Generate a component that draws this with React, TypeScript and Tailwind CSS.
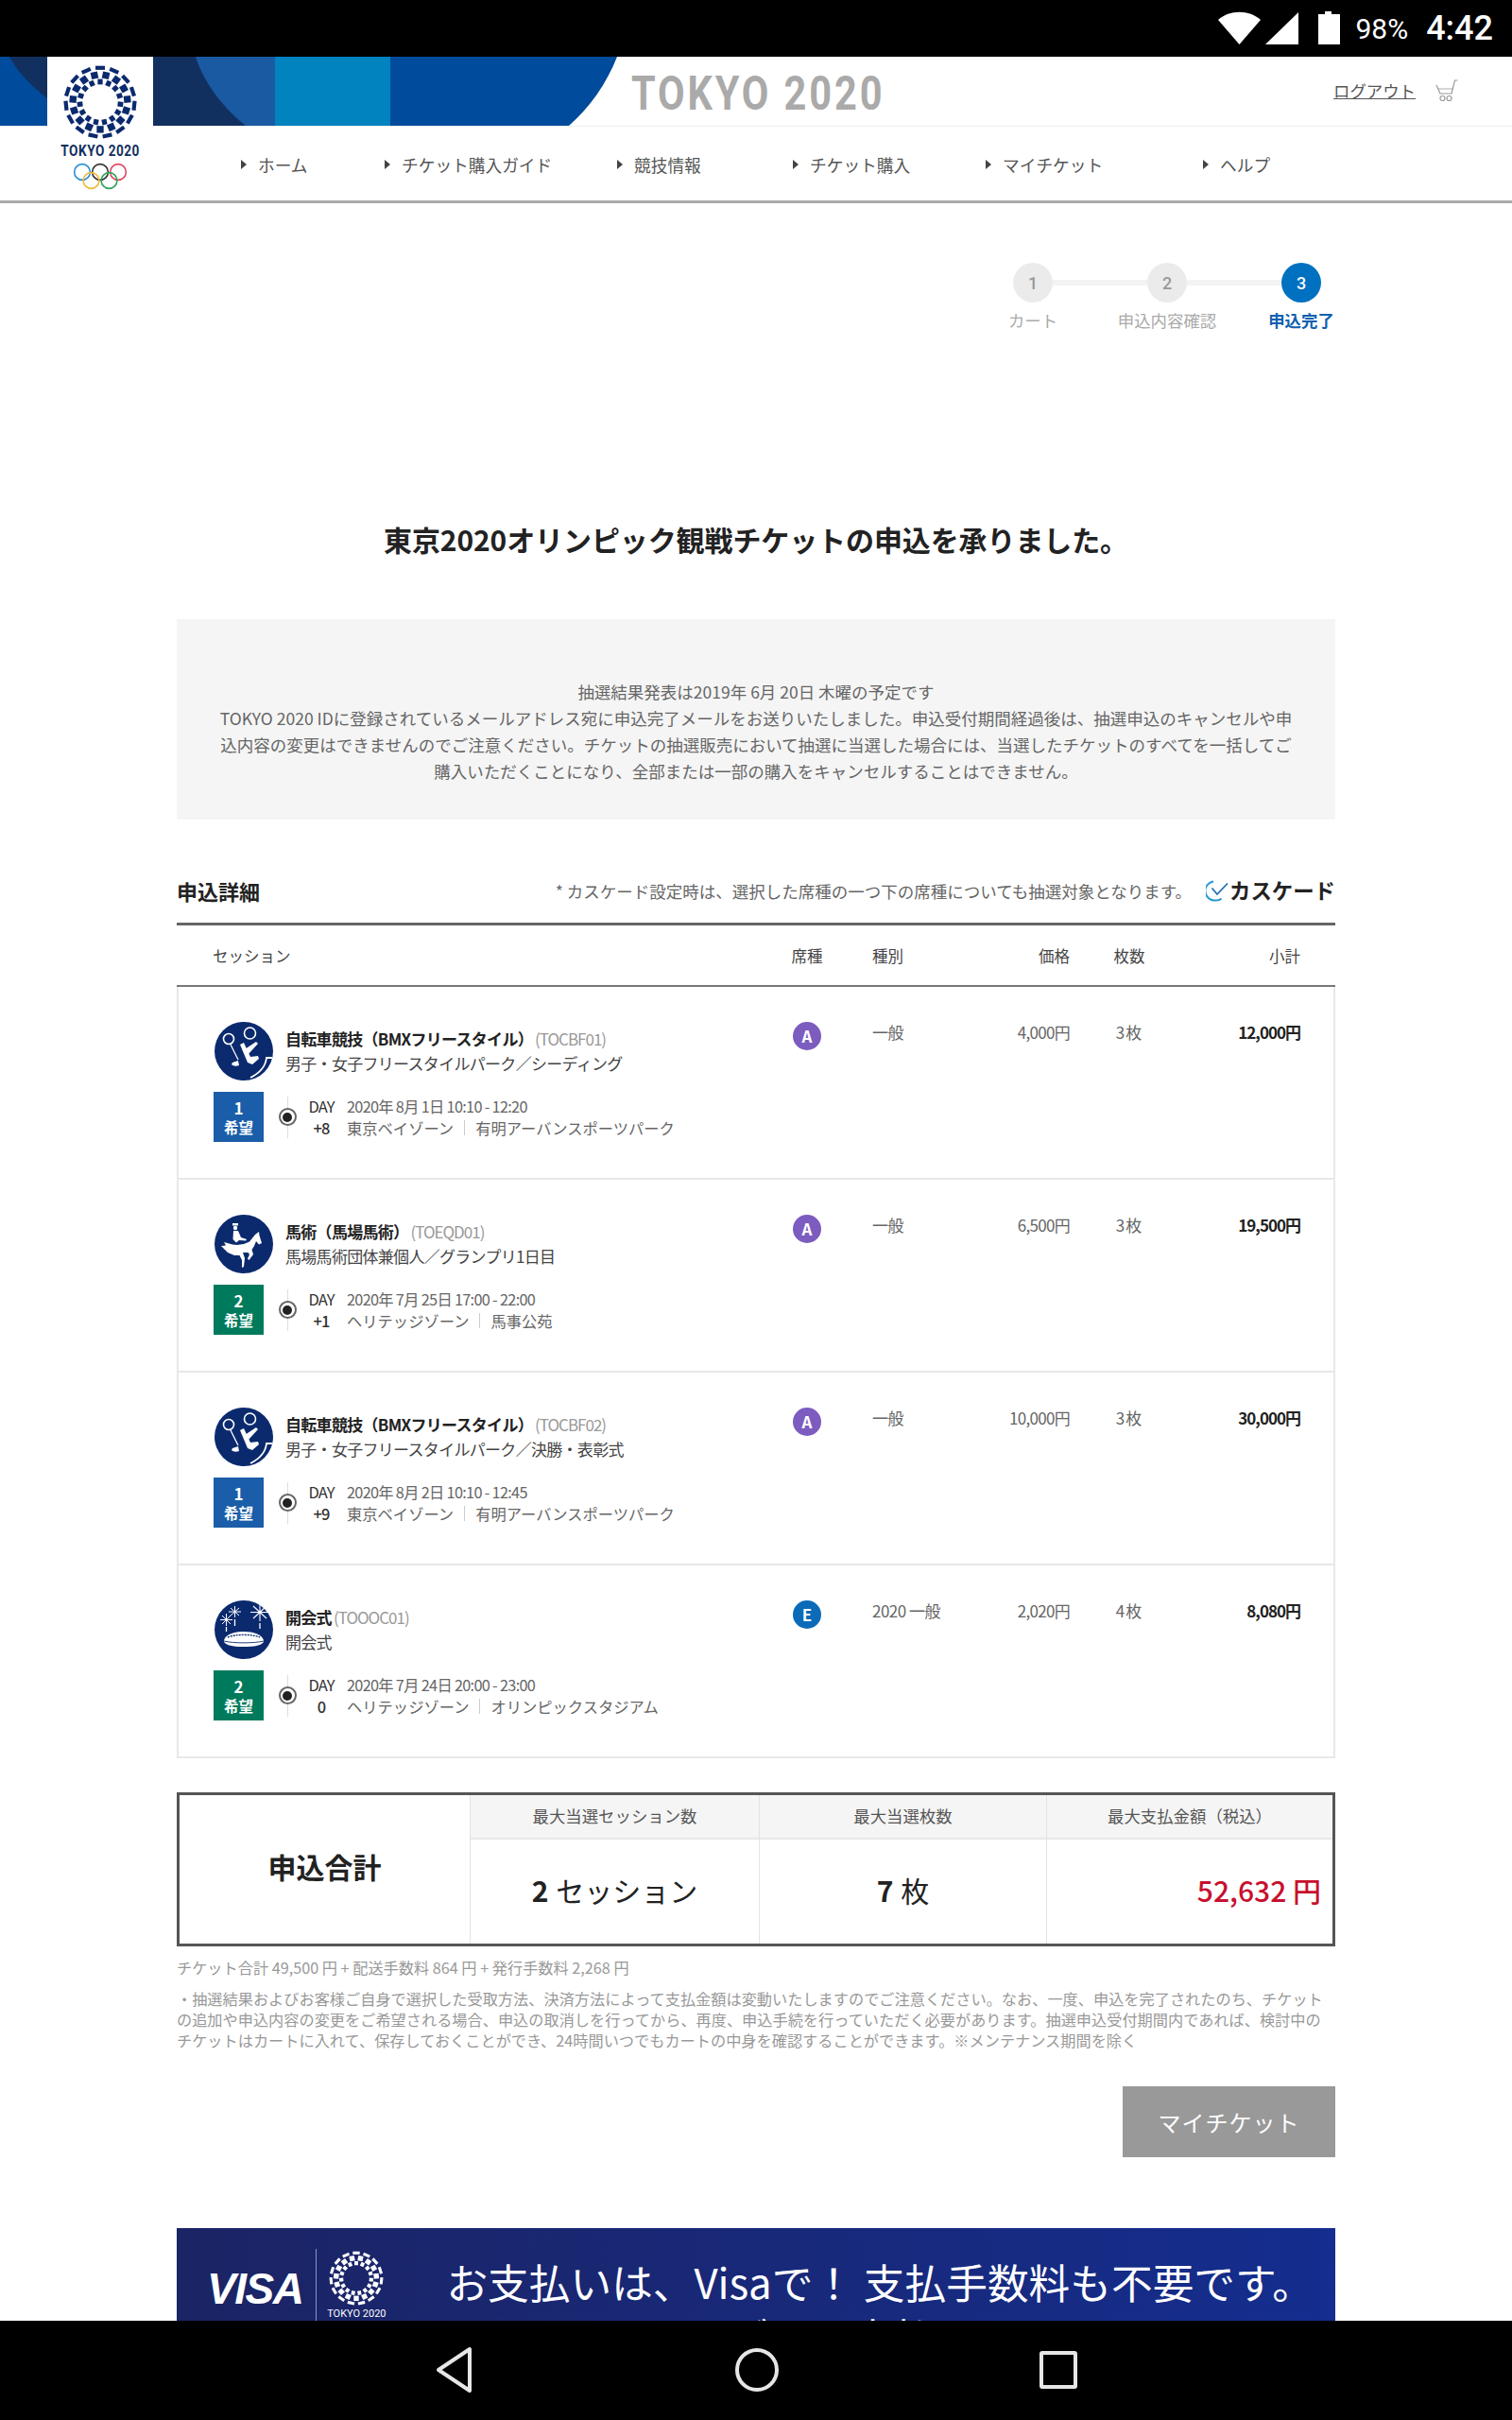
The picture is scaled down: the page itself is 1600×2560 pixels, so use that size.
const navItems = [
  { label: "ホーム", w: "w-[152px]" },
  { label: "チケット購入ガイド", w: "w-[246px]" },
  { label: "競技情報", w: "w-[186px]" },
  { label: "チケット購入", w: "w-[204px]" },
  { label: "マイチケット", w: "w-[230px]" },
  { label: "ヘルプ", w: "w-[100px]" },
]

const sessions = [
  {
    icon: "bmx",
    title: "自転車競技（BMXフリースタイル）",
    code: "(TOCBF01)",
    sub: "男子・女子フリースタイルパーク／シーディング",
    rank: 1,
    day: "+8",
    date: "2020年 8月 1日 10:10 - 12:20",
    zone: "東京ベイゾーン",
    venue: "有明アーバンスポーツパーク",
    seat: "A",
    kind: "一般",
    price: "4,000円",
    count: "3枚",
    total: "12,000円",
  },
  {
    icon: "horse",
    title: "馬術（馬場馬術）",
    code: "(TOEQD01)",
    sub: "馬場馬術団体兼個人／グランプリ1日目",
    rank: 2,
    day: "+1",
    date: "2020年 7月 25日 17:00 - 22:00",
    zone: "ヘリテッジゾーン",
    venue: "馬事公苑",
    seat: "A",
    kind: "一般",
    price: "6,500円",
    count: "3枚",
    total: "19,500円",
  },
  {
    icon: "bmx",
    title: "自転車競技（BMXフリースタイル）",
    code: "(TOCBF02)",
    sub: "男子・女子フリースタイルパーク／決勝・表彰式",
    rank: 1,
    day: "+9",
    date: "2020年 8月 2日 10:10 - 12:45",
    zone: "東京ベイゾーン",
    venue: "有明アーバンスポーツパーク",
    seat: "A",
    kind: "一般",
    price: "10,000円",
    count: "3枚",
    total: "30,000円",
  },
  {
    icon: "ceremony",
    title: "開会式",
    code: "(TOOOC01)",
    sub: "開会式",
    rank: 2,
    day: "0",
    date: "2020年 7月 24日 20:00 - 23:00",
    zone: "ヘリテッジゾーン",
    venue: "オリンピックスタジアム",
    seat: "E",
    kind: "2020 一般",
    price: "2,020円",
    count: "4枚",
    total: "8,080円",
  },
]

function Emblem({ fill, size }: { fill: string; size: number }) {
  const rings = [
    { r: 34.5, w: 9.5, h: 4, offset: 0 },
    { r: 27.5, w: 7, h: 7, offset: 12 },
    { r: 20.5, w: 5, h: 5.5, offset: 0 },
  ]
  return (
    <svg width={size} height={size} viewBox="-40 -40 80 80">
      {rings.map((ring) =>
        Array.from({ length: 15 }).map((_, i) => {
          const a = i * 24 + ring.offset
          return (
            <rect
              key={ring.r + "-" + i}
              x={-ring.w / 2}
              y={-ring.r - ring.h / 2}
              width={ring.w}
              height={ring.h}
              fill={fill}
              transform={`rotate(${a})`}
            />
          )
        }),
      )}
    </svg>
  )
}

function OlympicRings() {
  return (
    <svg width="58" height="30" viewBox="0 0 58 30" fill="none" strokeWidth="1.6">
      <circle cx="10" cy="10" r="8.4" stroke="#2b8fd6" />
      <circle cx="29" cy="10" r="8.4" stroke="#333333" />
      <circle cx="48" cy="10" r="8.4" stroke="#e0455f" />
      <circle cx="19.5" cy="19" r="8.4" stroke="#f3b93a" />
      <circle cx="38.5" cy="19" r="8.4" stroke="#2fa35a" />
    </svg>
  )
}

function HeaderBand() {
  return (
    <svg width="660" height="73" viewBox="0 0 660 73" className="block">
      <rect width="660" height="73" fill="#004b9b" />
      <path d="M10 0 C20 18 34 32 50 44 L50 0 Z" fill="#12305f" />
      <rect x="162" width="129" height="73" fill="#12305f" />
      <path d="M207 0 C216 28 236 54 260 73 L291 73 L291 0 Z" fill="#1a5aa3" />
      <rect x="291" width="122" height="73" fill="#0083bf" />
      <path d="M653 0 C642 28 624 54 602 73 L660 73 L660 0 Z" fill="#ffffff" />
    </svg>
  )
}

function SessionIcon({ type }: { type: string }) {
  if (type === "bmx") {
    return (
      <svg width="62" height="62" viewBox="0 0 62 62" className="shrink-0">
        <circle cx="31" cy="31" r="31" fill="#0b2a6e" />
        <g fill="none" stroke="#ffffff">
          <circle cx="15" cy="18" r="5.5" strokeWidth="1.6" />
          <circle cx="37.5" cy="12" r="6" strokeWidth="1.6" />
          <path d="M17 24 L25 40" strokeWidth="1.3" />
          <path d="M61 38 L55 38 C54 48 46 55 38 59" strokeWidth="1.8" />
        </g>
        <path d="M27 24 L31 22 L38 37 L46 36 L47 39 L40 45 L35 43 Z" fill="#ffffff" />
        <path d="M32 29 L44 21 L46 23 L35 35 Z" fill="#ffffff" />
        <path d="M19 43 L25 41 L26 46 C23 47 20 47 18 45 Z" fill="#ffffff" />
      </svg>
    )
  }
  if (type === "horse") {
    return (
      <svg width="62" height="62" viewBox="0 0 62 62" className="shrink-0">
        <circle cx="31" cy="31" r="31" fill="#0b2a6e" />
        <path d="M19 9 H25 V11.5 H19 Z" fill="#ffffff" />
        <circle cx="22" cy="14" r="2.2" fill="#ffffff" />
        <path d="M20 17 L25 17 L28 24 L34 26 L33 27.5 L26 27 L23 29.5 L19.5 26 Z" fill="#ffffff" />
        <path
          d="M10 29 L19 31.5 L24 32 L31 31 L37 28.5 L43 21 L47 18 L47.5 22 L50 30 L47 31.5 L44 28 L42 33 L39.5 37 L41 42 L36.5 48 L35 46.5 L37 42 L35.5 40 L30 40 L32 46 L31 55 L29 56 L29 48 L26.5 43 L21 43 L14 40 L7 33 L12 32.5 Z"
          fill="#ffffff"
        />
      </svg>
    )
  }
  return (
    <svg width="62" height="62" viewBox="0 0 62 62" className="shrink-0">
      <circle cx="31" cy="31" r="31" fill="#0b2a6e" />
      <g stroke="#ffffff" fill="none">
        <path d="M8 16 L17 25 M17 16 L8 25 M12.5 14 V27 M6 20.5 H19" strokeWidth="1" />
        <path d="M17 8 L26 16 M26 8 L17 16 M21.5 6 V18 M15 12 H28" strokeWidth="1" />
        <path d="M41 6 L55 19 M55 6 L41 19 M48 3 V22 M38 12.5 H58" strokeWidth="1.1" />
        <path d="M12.5 28 V33 M21.5 20 V27 M48 24 V30" strokeWidth="1.3" />
      </g>
      <path d="M10 42 C12 36 21 33 31 33 C41 33 50 36 52 42 L52 44 C49 48 42 49 31 49 C20 49 13 48 10 44 Z" fill="#ffffff" />
      <path d="M14 39 C22 35.5 40 35.5 48 39" stroke="#0b2a6e" strokeWidth="1.4" fill="none" strokeDasharray="2 1" />
      <path d="M10 43 C20 45.5 42 45.5 52 43" stroke="#0b2a6e" strokeWidth="0.9" fill="none" />
    </svg>
  )
}

function SessionRow({ s }: { s: (typeof sessions)[number] }) {
  return (
    <div className="grid h-[204px] grid-cols-[637px_56px_120px_130px_126px_118px] border-b-2 border-[#e8e8e8] pt-[37px]">
      <div className="pl-[38px]">
        <div className="flex h-[62px] gap-[13px]">
          <SessionIcon type={s.icon} />
          <div className="pt-[5px] text-[17px] leading-[26px] tracking-[-0.7px]">
            <p className="whitespace-nowrap">
              <span className="font-bold text-[#222]">{s.title}</span>
              <span className="ml-[2px] tracking-[-1px] text-[#999]">{s.code}</span>
            </p>
            <p className="whitespace-nowrap text-[#444]">{s.sub}</p>
          </div>
        </div>
        <div className="mt-[12px] -ml-px flex items-center">
          <div
            className={`flex h-[53px] w-[53px] flex-col items-center justify-center text-white ${
              s.rank === 1 ? "bg-[#1a5da8]" : "bg-[#007a5c]"
            }`}
          >
            <span className="text-[17px] font-bold leading-[22px]">{s.rank}</span>
            <span className="text-[15.5px] font-bold leading-[19px]">希望</span>
          </div>
          <div className="relative ml-[15px] flex h-[44px] w-[20px] items-center justify-center">
            <div className="absolute inset-y-0 left-[9.5px] w-px bg-[#dddddd]" />
            <div className="relative flex h-[19px] w-[19px] items-center justify-center rounded-full border-2 border-[#666] bg-white">
              <div className="h-[10px] w-[10px] rounded-full bg-[#222]" />
            </div>
          </div>
          <div className="ml-[6px] w-[40px] text-center text-[16.5px] leading-[23px] tracking-[-0.9px] text-[#333]">
            <p>DAY</p>
            <p className="font-medium">{s.day}</p>
          </div>
          <div className="ml-[7px] text-[16.3px] leading-[23px] text-[#666]">
            <p className="whitespace-nowrap tracking-[-0.7px]">{s.date}</p>
            <p className="flex items-center whitespace-nowrap">
              {s.zone}
              <span className="mx-[11px] h-[16px] w-px bg-[#cccccc]" />
              {s.venue}
            </p>
          </div>
        </div>
      </div>
      <div className="flex justify-center">
        <div
          className={`flex h-[30px] w-[30px] items-center justify-center rounded-full text-[17px] font-bold text-white ${
            s.seat === "A" ? "bg-[#7c5cbf]" : "bg-[#0b6bb8]"
          }`}
        >
          {s.seat}
        </div>
      </div>
      <div className="pl-[41px] text-[17px] leading-[22px] tracking-[-0.5px] text-[#666]">{s.kind}</div>
      <div className="text-right text-[17px] leading-[22px] tracking-[-0.7px] text-[#666]">{s.price}</div>
      <div className="text-center text-[17px] leading-[22px] tracking-[1px] text-[#666]">{s.count}</div>
      <div className="text-right text-[17px] font-bold leading-[22px] tracking-[-1px] text-[#222]">{s.total}</div>
    </div>
  )
}

function SummaryCell({ head, children }: { head: string; children: React.ReactNode }) {
  return (
    <div className="flex flex-col border-l border-[#e3e3e3] first:border-[#555]">
      <div className="flex h-[47px] items-center justify-center border-b-2 border-[#e8e8e8] bg-[#f5f5f5] text-[17.4px] text-[#555]">
        {head}
      </div>
      <div className="flex flex-1 items-center justify-center pb-[3px] text-[30px] text-[#222]">{children}</div>
    </div>
  )
}

export default function App() {
  return (
    <div className="flex h-[2560px] w-[1600px] flex-col overflow-hidden bg-white font-['Noto_Sans_CJK_JP','Noto_Sans',sans-serif]">
      {/* android status bar */}
      <div className="flex h-[60px] shrink-0 items-center justify-end bg-black pr-[20px] font-['Roboto',sans-serif] text-white">
        <svg width="130" height="36" viewBox="0 0 130 36" className="mr-[15px]" fill="#ffffff">
          <path d="M0 9 C12 -2 33 -2 45 9 L22.5 35 Z" />
          <path d="M50 35 L85 1 V35 Z" />
          <path d="M106 3 H113 V0 H120 V3 H129 V35 H106 Z" />
        </svg>
        <span className="mr-[19px] text-[30px]">98%</span>
        <span className="text-[36px] font-medium">4:42</span>
      </div>

      {/* site header */}
      <header className="relative shrink-0 border-b-[3px] border-[#aaaaaa]">
        <div className="flex h-[74px] items-start border-b border-[#eeeeee]">
          <HeaderBand />
          <span className="ml-[8px] mt-[10px] origin-left scale-x-[0.83] whitespace-nowrap font-['Roboto',sans-serif] text-[50px] font-bold leading-[58px] tracking-[3.5px] text-[#aaaaaa]">
            TOKYO 2020
          </span>
          <div className="ml-auto mt-[24px] flex items-center pr-[57px]">
            <span className="text-[17.4px] leading-[24px] text-[#555] underline">ログアウト</span>
            <svg width="24" height="24" viewBox="0 0 24 24" fill="none" stroke="#999999" strokeWidth="1.2" className="ml-[21px]">
              <path d="M23.5 1 H20.5 L17 15 H5 L1 6" />
              <path d="M3 10 H19" strokeWidth="0.8" />
              <circle cx="7.5" cy="20" r="2.5" />
              <circle cx="14.5" cy="20" r="2.5" />
            </svg>
          </div>
        </div>
        <nav className="flex h-[78px] items-center pl-[255px] pt-[2px]">
          {navItems.map((item) => (
            <div key={item.label} className={`flex items-center gap-[12px] ${item.w}`}>
              <span className="h-0 w-0 border-y-[5px] border-l-[6px] border-y-transparent border-l-[#444]" />
              <span className="whitespace-nowrap text-[17.7px] text-[#555]">{item.label}</span>
            </div>
          ))}
        </nav>
        <div className="absolute left-[50px] top-0 flex h-[150px] w-[112px] flex-col items-center bg-white pt-[6px]">
          <Emblem fill="#0b2a6e" size={84} />
          <span className="scale-x-[0.85] whitespace-nowrap font-['Roboto',sans-serif] text-[16px] font-bold leading-[20px] tracking-[0.6px] text-[#12305f]">
            TOKYO 2020
          </span>
          <div className="mt-[2px]">
            <OlympicRings />
          </div>
        </div>
      </header>

      <main className="min-h-0 flex-1 overflow-hidden">
        {/* steps */}
        <div className="pl-[1022px] pt-[63px]">
          <div className="flex items-center pl-[50px]">
            <div className="flex h-[42px] w-[42px] items-center justify-center rounded-full bg-[#ebebeb] font-['Roboto',sans-serif] text-[18px] font-medium text-[#999]">1</div>
            <div className="h-[6px] w-[100px] bg-[#f3f3f3]" />
            <div className="flex h-[42px] w-[42px] items-center justify-center rounded-full bg-[#ebebeb] font-['Roboto',sans-serif] text-[18px] font-medium text-[#999]">2</div>
            <div className="h-[6px] w-[100px] bg-[#f3f3f3]" />
            <div className="flex h-[42px] w-[42px] items-center justify-center rounded-full bg-[#0070c0] font-['Roboto',sans-serif] text-[18px] font-medium text-white">3</div>
          </div>
          <div className="mt-[7px] grid w-[426px] grid-cols-3 text-center text-[17.4px] leading-[24px] text-[#aaaaaa]">
            <span>カート</span>
            <span>申込内容確認</span>
            <span className="font-bold text-[#1060b0]">申込完了</span>
          </div>
        </div>

        <h1 className="mt-[199px] text-center text-[30px] font-bold leading-[40px] tracking-[-0.1px] text-[#222]">
          東京2020オリンピック観戦チケットの申込を承りました。
        </h1>

        <div className="mx-[187px] mt-[65px]">
          <div className="h-[212px] bg-[#f5f5f5] px-[40px] pt-[63px] text-center text-[17.5px] leading-[28px] text-[#666]">
            <p>抽選結果発表は2019年 6月 20日 木曜の予定です</p>
            <p>
              TOKYO 2020 IDに登録されているメールアドレス宛に申込完了メールをお送りいたしました。申込受付期間経過後は、抽選申込のキャンセルや申込内容の変更はできませんのでご注意ください。チケットの抽選販売において抽選に当選した場合には、当選したチケットのすべてを一括してご購入いただくことになり、全部または一部の購入をキャンセルすることはできません。
            </p>
          </div>

          <div className="mt-[55px] flex h-[40px] items-center">
            <h2 className="text-[22px] font-bold text-[#222]">申込詳細</h2>
            <p className="ml-auto pt-[2px] text-[17.5px] text-[#666]">* カスケード設定時は、選択した席種の一つ下の席種についても抽選対象となります。</p>
            <svg width="24" height="24" viewBox="0 0 24 24" fill="none" className="ml-[15px] mr-[1px]">
              <path d="M8 2.5 A10 10 0 0 0 11 22.5 C13 22.5 15 22 16.5 20.5" stroke="#2a9bd4" strokeWidth="2" />
              <path d="M6.5 9.5 L12 16 L23 4.5" stroke="#1f6fb5" strokeWidth="1.8" />
            </svg>
            <span className="text-[22.4px] font-bold text-[#222]">カスケード</span>
          </div>

          <div className="mt-[14px] grid h-[68px] grid-cols-[639px_56px_120px_130px_126px_118px] items-center border-y-[3px] border-t-[#666] border-b-[#777] border-b-2 pt-[1px] text-[16.5px] text-[#444]">
            <span className="pl-[38px]">セッション</span>
            <span className="text-center">席種</span>
            <span className="pl-[41px]">種別</span>
            <span className="text-right">価格</span>
            <span className="text-center">枚数</span>
            <span className="text-right">小計</span>
          </div>

          <div className="border-x-2 border-[#e8e8e8]">
            {sessions.map((s) => (
              <SessionRow key={s.code} s={s} />
            ))}
          </div>

          {/* totals */}
          <div className="mt-[36px] grid h-[163px] grid-cols-[307px_306px_304px_1fr] border-[3px] border-[#555]">
            <div className="flex items-center justify-center pb-[7px] text-[30px] font-bold text-[#222]">申込合計</div>
            <SummaryCell head="最大当選セッション数">
              <span className="font-bold">2</span>
              <span className="ml-[8px]">セッション</span>
            </SummaryCell>
            <SummaryCell head="最大当選枚数">
              <span className="font-bold">7</span>
              <span className="ml-[8px]">枚</span>
            </SummaryCell>
            <SummaryCell head="最大支払金額（税込）">
              <span className="ml-auto pr-[12px] font-medium text-[#c8102e]">52,632 円</span>
            </SummaryCell>
          </div>

          <p className="mt-[11px] text-[16.2px] leading-[22px] text-[#999]">
            チケット合計 49,500 円 + 配送手数料 864 円 + 発行手数料 2,268 円
          </p>
          <p className="mt-[11px] text-[16.2px] leading-[22px] text-[#999]">
            ・抽選結果およびお客様ご自身で選択した受取方法、決済方法によって支払金額は変動いたしますのでご注意ください。なお、一度、申込を完了されたのち、チケットの追加や申込内容の変更をご希望される場合、申込の取消しを行ってから、再度、申込手続を行っていただく必要があります。抽選申込受付期間内であれば、検討中のチケットはカートに入れて、保存しておくことができ、24時間いつでもカートの中身を確認することができます。※メンテナンス期間を除く
          </p>

          <div className="mt-[38px] flex justify-end">
            <button className="h-[75px] w-[225px] bg-[#999999] text-[24px] tracking-[1px] text-white">マイチケット</button>
          </div>

          {/* visa banner */}
          <div className="mt-[75px] flex h-[200px] bg-gradient-to-r from-[#1b2464] to-[#142d8e] pl-[32px] pt-[22px] text-white">
            <span className="mt-[20px] h-[44px] font-['Liberation_Sans',sans-serif] text-[46px] font-bold italic leading-[44px] tracking-[-1.5px]">VISA</span>
            <div className="ml-[14px] h-[100px] w-px bg-[#8a93c4]" />
            <div className="ml-[10px] flex w-[64px] flex-col items-center">
              <Emblem fill="#ffffff" size={62} />
              <span className="whitespace-nowrap font-['Roboto',sans-serif] text-[11px] leading-[14px]">TOKYO 2020</span>
            </div>
            <div className="ml-[63px] pt-[5px] text-[43.7px] leading-[58px]">
              <p className="whitespace-nowrap">お支払いは、Visaで！ 支払手数料も不要です。</p>
              <p className="whitespace-nowrap">Visaならスムーズにお支払いいただけます。</p>
            </div>
          </div>
        </div>
      </main>

      {/* android nav bar */}
      <div className="flex h-[105px] shrink-0 items-center justify-center gap-[275px] bg-black pb-[1px]">
        <svg width="44" height="50" viewBox="0 0 44 50" fill="none" stroke="#e6e6e6" strokeWidth="4" strokeLinejoin="round">
          <path d="M38 3 V47 L5 25 Z" />
        </svg>
        <svg width="46" height="46" viewBox="0 0 46 46" fill="none" stroke="#e6e6e6" strokeWidth="4">
          <circle cx="23" cy="23" r="21" />
        </svg>
        <svg width="42" height="42" viewBox="0 0 42 42" fill="none" stroke="#e6e6e6" strokeWidth="4" strokeLinejoin="round">
          <rect x="3" y="3" width="36" height="36" rx="1" />
        </svg>
      </div>
    </div>
  )
}
